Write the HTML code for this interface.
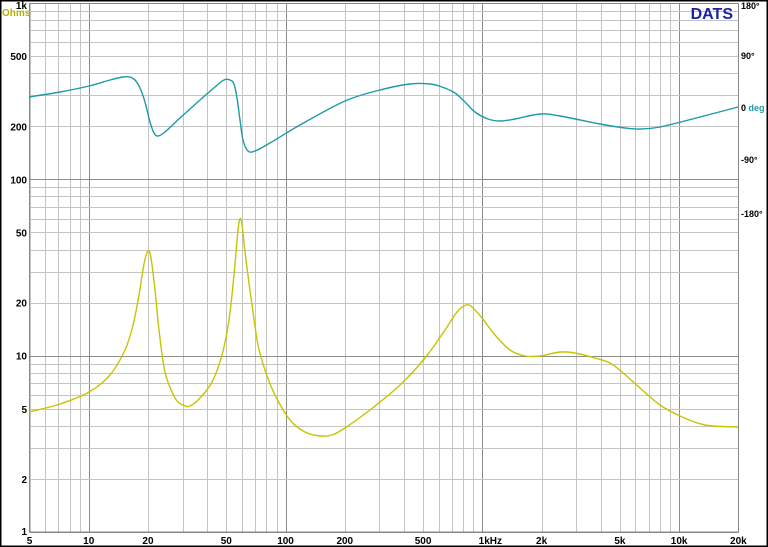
<!DOCTYPE html>
<html><head><meta charset="utf-8"><style>
html,body{margin:0;padding:0;background:#fff}
body{width:768px;height:547px;overflow:hidden;position:relative;font-family:"Liberation Sans",Arial,sans-serif}
svg{position:absolute;left:0;top:0}
text{font-family:"Liberation Sans",Arial,sans-serif;font-weight:bold;font-size:10px}
</style></head><body>
<svg id="s" width="768" height="547" viewBox="0 0 768 547">
<rect x="0.5" y="0.5" width="767" height="546" fill="#fff" stroke="#000" stroke-width="2"/>
<g id="grid"></g>
<rect x="29.5" y="3.5" width="709" height="528.5" fill="none" stroke="#888" stroke-width="1"/>
<path id="ph" fill="none" stroke="#1c9aa6" stroke-width="1.4"/>
<path id="im" fill="none" stroke="#c8c400" stroke-width="1.4"/>
<g fill="#000" text-anchor="end" id="ylab"></g>
<text x="2" y="16" fill="#b8b000" style="font-size:10px">Ohms</text>
<g fill="#000" text-anchor="middle" id="xlab"></g>
<text x="733" y="19" text-anchor="end" fill="#1a22a0" style="font-size:16px">DATS</text>
<g fill="#000" style="font-size:9px">
<text x="741" y="9" style="font-size:9px">180°</text>
<text x="741" y="59" style="font-size:9px">90°</text>
<text x="741" y="111" style="font-size:9px">0 <tspan fill="#1c9aa6">deg</tspan></text>
<text x="741" y="163" style="font-size:9px">-90°</text>
<text x="741" y="217" style="font-size:9px">-180°</text>
</g>
</svg>
<script>
var NS="http://www.w3.org/2000/svg";
function X(f){return 29.5+196.8*Math.log10(f/5);}
function Y(z){return 532-176.3*Math.log10(z);}
var g=document.getElementById('grid');
function ln(x1,y1,x2,y2,c){var l=document.createElementNS(NS,'line');l.setAttribute('x1',x1);l.setAttribute('y1',y1);l.setAttribute('x2',x2);l.setAttribute('y2',y2);l.setAttribute('stroke',c);l.setAttribute('stroke-width',1);g.appendChild(l);}
for(var d=1;d<=10000;d*=10){for(var m=1;m<10;m++){var f=d*m;if(f<5||f>20000)continue;var x=Math.round(X(f))+0.5;ln(x,3.5,x,532,(m==1)?'#8c8c8c':'#c4c4c4');}}
for(var d=1;d<=100;d*=10){for(var m=1;m<10;m++){var z=d*m;var y=Math.round(Y(z))+0.5;ln(29.5,y,738.5,y,(m==1)?'#8c8c8c':'#c4c4c4');}}
function cr(p){var s="M"+p[0][0]+","+p[0][1];for(var i=0;i<p.length-1;i++){var p0=p[i>0?i-1:0],p1=p[i],p2=p[i+1],p3=p[i+2<p.length?i+2:i+1];s+=" C"+(p1[0]+(p2[0]-p0[0])/6)+","+(p1[1]+(p2[1]-p0[1])/6)+" "+(p2[0]-(p3[0]-p1[0])/6)+","+(p2[1]-(p3[1]-p1[1])/6)+" "+p2[0]+","+p2[1];}return s;}
var ph=[[29,97],[60,92],[89,86],[110,80],[123,77],[130,77],[135,80],[140,88],[145,102],[150,122],[154,133],[158,136],[165,132],[180,118],[200,100],[215,87],[224,80],[230,80],[234,84],[237,98],[240,120],[243,140],[248,151],[255,151],[270,143],[300,125],[345,101],[380,90],[410,84],[430,84],[442,87],[455,93],[465,102],[475,112],[488,119],[500,121],[515,119],[540,114],[560,116],[600,124],[625,128],[640,129],[660,127],[700,117],[738,107]];
var im=[[29,412],[60,404],[89,392],[110,375],[125,350],[133,325],[139,295],[144,264],[148,251],[151,258],[155,290],[159,330],[165,372],[175,398],[183,405],[190,406],[200,398],[212,382],[222,355],[229,320],[234,275],[238,230],[240,219],[242,225],[246,260],[252,305],[258,345],[265,370],[275,395],[290,420],[305,432],[320,436],[332,435],[345,428],[370,410],[400,385],[425,358],[445,330],[457,312],[466,305],[472,307],[482,318],[495,335],[510,350],[525,356],[540,356],[560,352],[575,353],[595,358],[610,363],[622,372],[640,388],[660,405],[680,416],[705,425],[738,427]];
document.getElementById('ph').setAttribute('d',cr(ph));
document.getElementById('im').setAttribute('d',cr(im));
var yl=document.getElementById('ylab');
[[1000,'1k'],[500,'500'],[200,'200'],[100,'100'],[50,'50'],[20,'20'],[10,'10'],[5,'5'],[2,'2'],[1,'1']].forEach(function(a){var t=document.createElementNS(NS,'text');t.setAttribute('x',27);var y=Y(a[0])+4;if(a[0]==1000)y=9;if(a[0]==1)y=535;t.setAttribute('y',y);t.textContent=a[1];yl.appendChild(t);});
var xl=document.getElementById('xlab');
[[5,'5'],[10,'10'],[20,'20'],[50,'50'],[100,'100'],[200,'200'],[500,'500'],[1000,'1kHz'],[2000,'2k'],[5000,'5k'],[10000,'10k'],[20000,'20k']].forEach(function(a){var t=document.createElementNS(NS,'text');t.setAttribute('x',X(a[0])+(a[0]==1000?8:0));t.setAttribute('y',544);t.textContent=a[1];xl.appendChild(t);});
</script>
</body></html>
